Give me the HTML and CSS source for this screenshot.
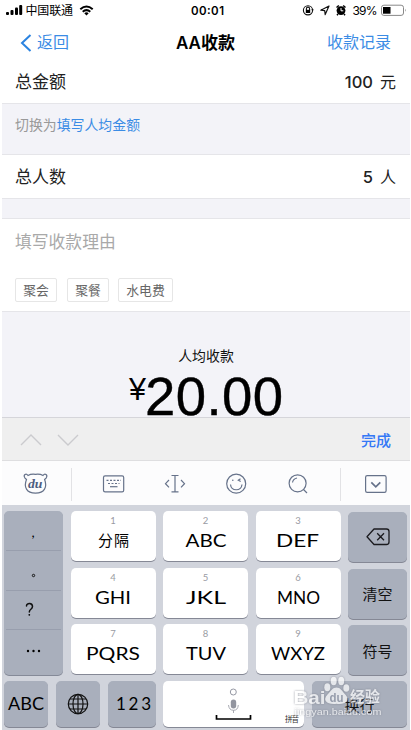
FILE: index.html
```html
<!DOCTYPE html>
<html lang="zh-CN">
<head>
<meta charset="utf-8">
<title>AA收款</title>
<link rel="stylesheet" href="styles.css">
</head>
<body>
<div class="screen">
  <header class="status">
    <svg class="status-art" width="408" height="21" viewBox="2 0 408 21">
      <g fill="#000"><rect x="6" y="12" width="3" height="3" rx="1"/><rect x="10.5" y="10" width="3" height="5" rx="1"/><rect x="15" y="7.5" width="3" height="7.5" rx="1"/><rect x="19.2" y="5" width="3" height="10" rx="1"/></g>
      <text x="25.5" y="14.8" font-size="12" textLength="47.5">中国联通</text>
      <g fill="none" stroke="#000" stroke-width="2"><path d="M80.3 9.2Q86.5 3.7 92.7 9.2M82.7 11.8Q86.5 8.5 90.3 11.8"/></g>
      <path d="M84.3 13.2Q86.5 11.4 88.7 13.2L86.5 15.4Z"/>
      <text class="clock" x="191" y="14.8" font-size="11.5" textLength="33">00:01</text>
      <g fill="none" stroke="#111" stroke-width="1.1"><circle cx="308" cy="10.3" r="4.6"/><path d="M306.4 10V8.7a1.6 1.6 0 0 1 3.2 0V10M311.5 9.8h2"/></g>
      <rect x="305.8" y="9.8" width="4.4" height="3.2"/>
      <path d="M329 6L320.8 10.2L324.7 10.7L325.2 14.6Z" fill="none" stroke="#111" stroke-width="1.2" stroke-linejoin="round"/>
      <circle cx="341" cy="10.6" r="4.4"/><path d="M336.5 7.5l2.3-2M345.5 7.5l-2.3-2M338 14l-1 1.3M344 14l1 1.3" stroke="#000" stroke-width="1.5"/><path d="M341 8v2.8h2.3" fill="none" stroke="#fff" stroke-width="1"/>
      <text x="352.5" y="14.8" font-size="12" textLength="25">39%</text>
      <rect x="381.5" y="5.2" width="22" height="10.2" rx="2.4" fill="#fff" stroke="#888" stroke-width="1"/><rect x="383" y="7" width="7.5" height="6.7"/><path d="M405 8.7q1.5 1.5 0 3z" fill="#888"/>
    </svg>
  </header>
  <nav class="nav">
    <span class="back"><svg width="12" height="18" viewBox="0 0 12 18"><path d="M10.5 1L2 9L10.5 17" fill="none" stroke="#2b83e0" stroke-width="2"/></svg>返回</span>
    <h1>AA收款</h1>
    <span class="records">收款记录</span>
  </nav>
  <section class="row row-total"><span>总金额</span><span class="value"><b>100</b>元</span></section>
  <section class="switch">切换为<a>填写人均金额</a></section>
  <section class="row row-people"><span>总人数</span><span class="value"><b>5</b>人</span></section>
  <div class="gap"></div>
  <section class="reason">
    <div class="placeholder">填写收款理由</div>
    <div class="tags"><span>聚会</span><span>聚餐</span><span class="wide">水电费</span></div>
  </section>
  <section class="result">
    <div class="caption">人均收款</div>
    <svg class="amount" width="160" height="46" viewBox="126 371 160 46"><text class="yen" x="129" y="399.5" font-size="31" textLength="17" lengthAdjust="spacingAndGlyphs">¥</text><text x="145" y="415" font-size="54.5" textLength="138">20.00</text></svg>
  </section>
  <div class="accessory">
    <svg width="62" height="14" viewBox="0 0 62 14"><path d="M1 12L11 2L21 12M38 2L48 12L58 2" fill="none" stroke="#cbcbce" stroke-width="1.4"/></svg>
    <span>完成</span>
  </div>
  <div class="tools">
    <svg width="408" height="44" viewBox="2 461 408 44" fill="none" stroke="#66728a" stroke-width="1.2">
      <path d="M28 475.5Q31 473.7 35.5 474.3Q40 473.7 43 475.5C45 472.8 48 475 46.3 477.8L44.6 479.5C47.5 487 44.5 493.2 35.5 493.2S23.5 487 26.5 479.5L24.8 477.8C23 475 26 472.8 28 475.5Z"/>
      <text class="du" x="28" y="488.3" font-size="13" textLength="14.5" lengthAdjust="spacingAndGlyphs">du</text>
      <path d="M71.5 468V501M340.5 468V501" stroke="#e2e2e5" stroke-width="1"/>
      <rect x="103.5" y="475.8" width="20.2" height="16" rx="1.6"/>
      <path d="M106.5 480.3H121M108 483.5H119.5" stroke-dasharray="2 1.5"/><path d="M110 486.7H117.5"/>
      <path d="M171.5 475.5H178.5M175 475.5V491.8M171.5 491.8H178.5M169 480L165.5 483.7L169 487.4M181 480L184.5 483.7L181 487.4"/>
      <circle cx="236.2" cy="483.7" r="9.5"/><path d="M230.5 484.5C231.2 491.5 241.2 491.5 242 484.5M240.5 478.7L238.3 480.2L240.7 481.5"/><circle cx="232.8" cy="480.3" r=".8" fill="#66728a" stroke="none"/>
      <circle cx="297.6" cy="483.3" r="8.5"/><path d="M303.5 489.5L307 493M292.5 482.5Q293 479 297 478"/>
      <rect x="365.6" y="475.7" width="20.5" height="16.6" rx="1.6"/><path d="M371.3 482.3L375.8 486.8L380.3 482.3" stroke-width="1.7"/>
    </svg>
  </div>
  <main class="keyboard">
    <div class="upper">
      <div class="side"><svg width="59" height="163" viewBox="4 511 59 163"><path d="M6 550.5H61M6 590.5H61M6 629.5H61" stroke="#989ead"/><text x="31.5" y="537" font-size="14">,</text><circle cx="33.5" cy="575.5" r="1.2" fill="none" stroke="#111"/><path d="M26.5 606C26.5 602.5 32.5 602.5 32.5 606.5C32.5 609.5 29.3 609 29.3 612" fill="none" stroke="#111" stroke-width="1.5" stroke-linecap="round"/><circle cx="29.3" cy="614.8" r=".9"/><g><circle cx="28" cy="651" r="1.2"/><circle cx="33.5" cy="651" r="1.2"/><circle cx="39" cy="651" r="1.2"/></g></svg></div>
      <div class="letters">
        <div class="key"><small>1</small><svg width="60" height="22"><text class="han" x="15" y="16" textLength="31">分隔</text></svg></div>
        <div class="key"><small>2</small><svg width="60" height="22"><text x="9.5" y="16.5" textLength="41" lengthAdjust="spacingAndGlyphs">ABC</text></svg></div>
        <div class="key"><small>3</small><svg width="60" height="22"><text x="8" y="16.5" textLength="43" lengthAdjust="spacingAndGlyphs">DEF</text></svg></div>
        <div class="key"><small>4</small><svg width="60" height="22"><text x="12" y="16.5" textLength="36" lengthAdjust="spacingAndGlyphs">GHI</text></svg></div>
        <div class="key"><small>5</small><svg width="60" height="22"><text x="10" y="16.5" textLength="40" lengthAdjust="spacingAndGlyphs">JKL</text></svg></div>
        <div class="key"><small>6</small><svg width="60" height="22"><text x="9" y="16.5" textLength="43" lengthAdjust="spacingAndGlyphs">MNO</text></svg></div>
        <div class="key"><small>7</small><svg width="60" height="22"><text x="3" y="16.5" textLength="54" lengthAdjust="spacingAndGlyphs">PQRS</text></svg></div>
        <div class="key"><small>8</small><svg width="60" height="22"><text x="10" y="16.5" textLength="40" lengthAdjust="spacingAndGlyphs">TUV</text></svg></div>
        <div class="key"><small>9</small><svg width="60" height="22"><text x="3" y="16.5" textLength="54" lengthAdjust="spacingAndGlyphs">WXYZ</text></svg></div>
      </div>
      <div class="actions">
        <div class="key dark"><svg width="24" height="18" viewBox="0 0 24 18" fill="none" stroke="#1b1b1f" stroke-width="1.3" stroke-linejoin="round"><path d="M8 1H20.5Q23 1 23 3.5V14Q23 16.5 20.5 16.5H8L1 8.8ZM11.2 5.3L18 12.2M18 5.3L11.2 12.2"/></svg></div>
        <div class="key dark">清空</div>
        <div class="key dark">符号</div>
      </div>
    </div>
    <div class="bottom">
      <div class="key dark"><svg width="44" height="22"><text x="4" y="17" textLength="36" lengthAdjust="spacingAndGlyphs">ABC</text></svg></div>
      <div class="key dark"><svg width="22" height="22" viewBox="0 0 22 22" fill="none" stroke="#111" stroke-width="1.2"><circle cx="11" cy="11" r="9.7"/><ellipse cx="11" cy="11" rx="5" ry="9.7"/><path d="M11 1.3V20.7M1.3 11H20.7M3 6H19M3 16H19"/></svg></div>
      <div class="key dark"><svg width="44" height="22"><text x="6" y="17" textLength="35">123</text></svg></div>
      <div class="key space"><svg width="141" height="45" viewBox="163 681 141 45"><circle cx="233.3" cy="691" r="3" fill="none" stroke="#9699a4"/><rect x="230.8" y="698.5" width="5.4" height="9" rx="2.7" fill="#92959f"/><path d="M228.5 704Q229 709.3 233.5 709.3T238.3 704M233.5 709V712" fill="none" stroke="#a9abb3"/><path d="M216.5 714V718H250.5V714" fill="none" stroke="#000" stroke-width="1.7"/><text x="285" y="721" fill="#333" textLength="14">拼音</text></svg></div>
      <div class="key dark enter">换行</div>
    </div>
    <svg class="watermark" width="94" height="44" viewBox="292 675 94 44">
      <text class="brand" x="293.5" y="704.3" font-size="19" textLength="32" lengthAdjust="spacingAndGlyphs">Bai</text>
      <ellipse cx="327.3" cy="687.3" rx="3" ry="4"/><ellipse cx="333.7" cy="681" rx="3" ry="4.2"/><ellipse cx="341.2" cy="681" rx="3" ry="4.2"/><ellipse cx="346.3" cy="688" rx="3" ry="3.8"/>
      <path d="M336.5 687.5C340.5 687.5 342 691 345.3 694.5C351 701 345 704.8 336.5 703.7C328 704.8 321.5 701 327.5 694.5C331 691 332.5 687.5 336.5 687.5Z"/>
      <text class="paw-text" x="329.5" y="701.5" font-size="12" textLength="14" lengthAdjust="spacingAndGlyphs">du</text>
      <text class="brand" x="350" y="702.2" font-size="15" textLength="30">经验</text>
      <text x="294.5" y="715.3" font-size="9.5" textLength="87" lengthAdjust="spacingAndGlyphs">jingyan.baidu.com</text>
    </svg>
  </main>
</div>
</body>
</html>
```
FILE: styles.css
```css
* { box-sizing: border-box; }
body { margin: 0; background: #fff; font-family: "Liberation Sans", "Noto Sans CJK SC", sans-serif; color: #111; }
svg { display: block; flex-shrink: 0; overflow: visible; }
.screen { width: 411px; height: 730px; padding: 0 1px 0 2px; overflow: hidden; display: flex; flex-direction: column; }
.screen > * { flex-shrink: 0; }
.status { height: 21px; font-family: Inter, "Noto Sans CJK SC", sans-serif; }
.clock { font-weight: 600; }
.nav { height: 41px; display: grid; grid-template-columns: 1fr auto 1fr; align-items: center; padding: 3px 19px 0 18px; color: #3b8ce5; font-size: 16px; line-height: 24px; }
.back { display: flex; align-items: center; gap: 5px; }
.nav h1 { margin: 0; font: 600 17px/24px Inter, "Noto Sans CJK SC", sans-serif; color: #000; }
.records { text-align: right; }
.row { display: flex; justify-content: space-between; align-items: center; padding: 1px 14px 0 13px; font-size: 17px; border-bottom: 1px solid #e5e5e9; line-height: 24px; color: #222; }
.row-total { height: 42px; padding-bottom: 1px; }
.row-people { height: 45px; border-top: 1px solid #e5e5e9; padding-top: 2px; }
.value { display: flex; gap: 7px; font-size: 16px; }
.value b { font: 500 16.5px/23px Inter, sans-serif; }
.switch { height: 50px; background: #f3f3f8; padding: 11px 13px; font-size: 13.9px; line-height: 20px; color: #999; }
.switch a { color: #3b8ce5; }
.gap { height: 19px; background: #f3f3f8; }
.reason { height: 94px; border-top: 1px solid #e5e5e9; border-bottom: 1px solid #e5e5e9; padding: 12px 13px; }
.placeholder { font-size: 16.8px; line-height: 24px; color: #a9a9a9; }
.tags { display: flex; gap: 10px; margin-top: 23px; }
.tags span { width: 42px; height: 24px; border: 1px solid #e6e6e6; border-radius: 2px; font-size: 12.8px; line-height: 23px; text-align: center; color: #666; }
.tags .wide { width: 55px; margin-left: -1px; }
.result { height: 105px; background: #f3f3f8; display: flex; flex-direction: column; align-items: center; padding-top: 34px; }
.caption { font-size: 13.9px; line-height: 20px; margin-bottom: 5px; }
.amount { fill: #000; stroke: #000; stroke-width: .4; }
.yen { stroke: none; }
.accessory { height: 44px; background: #efefef; border-top: 1px solid #d5d5da; border-bottom: 1px solid #dedee0; display: flex; align-items: center; justify-content: space-between; padding: 1px 19px 0 18px; color: #3478f6; font-size: 15px; font-weight: 500; }
.tools { height: 44px; background: #fcfcfd; }
.du { font-family: "Liberation Serif", serif; font-style: italic; font-weight: bold; fill: #4d5d80; stroke: none; }
.keyboard { position: relative; height: 225px; background: #d1d4dc; padding: 6px 3px 2px 2px; font-family: Lato, "Noto Sans CJK SC", sans-serif; }
.upper { display: grid; grid-template-columns: 59px 270px 59px; justify-content: space-between; height: 164px; }
.side { background: #a9afbc; border-radius: 5px; box-shadow: 0 1px #858a98; }
.letters { display: grid; grid-template: repeat(3, 50px) / repeat(3, 85px); gap: 6.5px 7.5px; }
.key { display: flex; align-items: center; justify-content: center; background: #fff; border-radius: 5px; box-shadow: 0 1px #858895; color: #111; }
.letters .key { flex-direction: column; justify-content: flex-start; padding-top: 4px; }
.key text { font-size: 17px; }
.key .han { font-size: 15px; }
.key small { font-size: 9.5px; line-height: 12px; color: #999ba3; margin-bottom: 3px; }
.actions { display: grid; grid-template-rows: repeat(3, 50px); gap: 6.5px; padding-top: 1px; }
.key.dark { background: #a9afbc; font-size: 15px; }
.bottom { display: grid; grid-template-columns: 44px 44px 48px 141px 95px; column-gap: 7.75px; height: 46px; margin-top: 6px; }
.space text { font-size: 7.5px; }
.watermark { position: absolute; right: 24px; bottom: 11px; fill: #fff; font-family: "Liberation Sans", "Noto Sans CJK SC", sans-serif; opacity: .7; filter: drop-shadow(0 0 .8px #777b87); }
.brand, .paw-text { font-weight: bold; }
.paw-text { fill: #8f96a6; }
```
